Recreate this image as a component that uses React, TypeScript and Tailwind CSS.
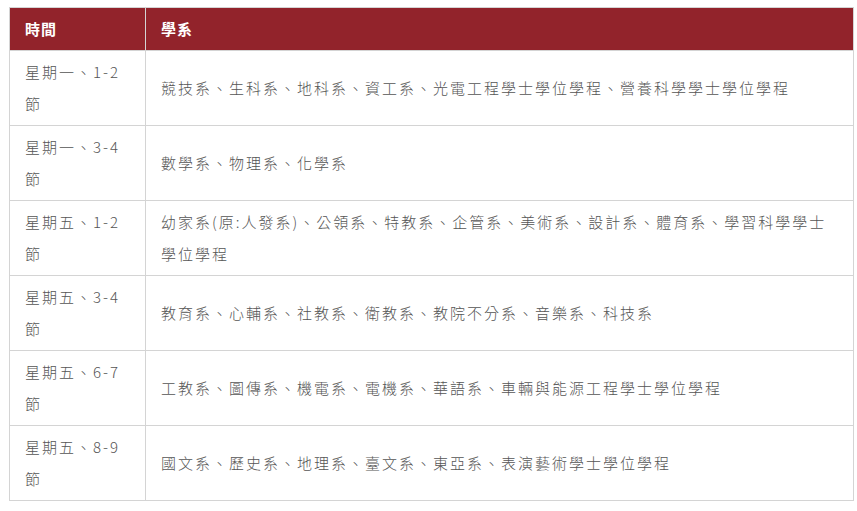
const rows: { time: string; depts: string }[] = [
  { time: "星期一、1-2節", depts: "競技系、生科系、地科系、資工系、光電工程學士學位學程、營養科學學士學位學程" },
  { time: "星期一、3-4節", depts: "數學系、物理系、化學系" },
  { time: "星期五、1-2節", depts: "幼家系(原:人發系)、公領系、特教系、企管系、美術系、設計系、體育系、學習科學學士學位學程" },
  { time: "星期五、3-4節", depts: "教育系、心輔系、社教系、衛教系、教院不分系、音樂系、科技系" },
  { time: "星期五、6-7節", depts: "工教系、圖傳系、機電系、電機系、華語系、車輛與能源工程學士學位學程" },
  { time: "星期五、8-9節", depts: "國文系、歷史系、地理系、臺文系、東亞系、表演藝術學士學位學程" },
];

export default function App() {
  return (
    <div className="min-h-screen bg-white pt-[7px] pl-[9px] pr-[3px] font-['Noto_Sans_CJK_TC','Noto_Sans',sans-serif]">
      <table className="w-[845px] border-collapse table-fixed">
        <colgroup>
          <col className="w-[136px]" />
          <col />
        </colgroup>
        <thead>
          <tr className="bg-[#92232b] text-white">
            <th className="h-[43px] border border-[#d4d4d4] px-[15px] text-left text-[15px] font-bold tracking-[1px]">時間</th>
            <th className="h-[43px] border border-[#d4d4d4] px-[15px] text-left text-[15px] font-bold tracking-[1px]">學系</th>
          </tr>
        </thead>
        <tbody>
          {rows.map((r) => (
            <tr key={r.time}>
              <td className="h-[75px] border border-[#d4d4d4] px-[15px] py-[5px] align-middle text-[15px] font-light leading-[32px] tracking-[2px] text-[#555]">
                {r.time}
              </td>
              <td className="h-[75px] border border-[#d4d4d4] px-[15px] py-[5px] align-middle text-[15px] font-light leading-[32px] tracking-[2px] text-[#555]">
                {r.depts}
              </td>
            </tr>
          ))}
        </tbody>
      </table>
    </div>
  );
}
